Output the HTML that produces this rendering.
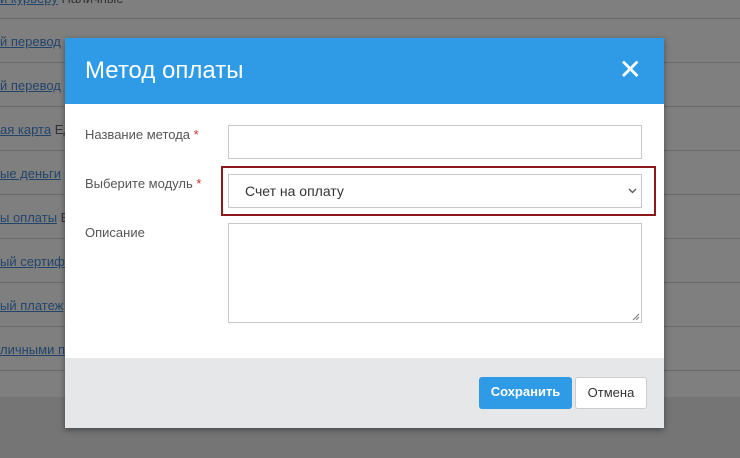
<!DOCTYPE html>
<html><head><meta charset="utf-8"><style>
body{margin:0;width:740px;height:458px;overflow:hidden;background:#757575;font-family:"Liberation Sans","DejaVu Sans",sans-serif;position:relative}
.bg{position:absolute;left:0;top:0;width:740px;height:397px;background:#7f7f7f}
.line{position:absolute;left:0;width:740px;height:1px;background:#6a6a6a}
.t{position:absolute;left:0;font-size:13px;color:#333;white-space:nowrap}
.t a{color:#23456b;text-decoration:underline}
.modal{position:absolute;left:65px;top:38px;width:599px;height:390px;background:#fff;box-shadow:0 2px 6px rgba(0,0,0,.4)}
.hd{height:66px;background:#2f9be6;color:#fff;font-size:24px;line-height:66px;padding-left:20px}
.x{position:absolute;right:22px;top:18px;color:#fff;font-size:28px;font-weight:bold;line-height:28px}
.lbl{position:absolute;left:20px;font-size:13px;color:#555}
.lbl b{color:#c9302c;font-weight:normal}
.inp{position:absolute;left:163px;width:414px;border:1px solid #c8c8c8;background:#fff;box-sizing:border-box}
.ft{position:absolute;left:0;top:320px;width:599px;height:70px;background:#e6e7e9}
.btn{position:absolute;top:19px;height:32px;box-sizing:border-box;font-size:13px;line-height:30px;text-align:center;border-radius:3px}
</style></head><body>
<div class="bg"></div>
<div class="line" style="top:18px"></div><div class="line" style="top:62px"></div><div class="line" style="top:106px"></div><div class="line" style="top:150px"></div><div class="line" style="top:194px"></div><div class="line" style="top:238px"></div><div class="line" style="top:282px"></div><div class="line" style="top:326px"></div><div class="line" style="top:370px"></div>
<div class="t" style="top:-9px"><a>и курьеру</a> Наличные</div>
<div class="t" style="top:34px"><a>й перевод</a></div>
<div class="t" style="top:78px"><a>й перевод</a></div>
<div class="t" style="top:122px"><a>ая карта</a> Ед</div>
<div class="t" style="top:166px"><a>ые деньги</a></div>
<div class="t" style="top:210px"><a>ы оплаты</a> Е</div>
<div class="t" style="top:254px"><a>ый сертифи</a></div>
<div class="t" style="top:298px"><a>ый платеж</a></div>
<div class="t" style="top:342px"><a>личными п</a></div>
<div class="modal">
<div class="hd">Метод оплаты</div><div class="x">✕</div>
<div class="lbl" style="top:89px">Название метода <b>*</b></div>
<div class="inp" style="top:87px;height:34px"></div>
<div class="lbl" style="top:138px">Выберите модуль <b>*</b></div>
<div style="position:absolute;left:156px;top:128px;width:435px;height:50px;border:2px solid #8b1a1a;box-sizing:border-box"></div>
<div class="inp" style="top:136px;height:34px;font-size:14px;color:#333;line-height:32px;padding-left:16px">Счет на оплату<svg style="position:absolute;right:4px;top:13px" width="9" height="6"><path d="M1 1l3.5 3.5L8 1" stroke="#555" stroke-width="1.3" fill="none"/></svg></div>
<div class="lbl" style="top:187px">Описание</div>
<div class="inp" style="top:185px;height:100px"><svg style="position:absolute;right:1px;bottom:1px" width="8" height="8"><path d="M7 1L1 7M7 4L4 7" stroke="#777"/></svg></div>
<div class="ft">
<div class="btn" style="left:414px;width:93px;background:#2f9be6;color:#fff;font-weight:bold">Сохранить</div>
<div class="btn" style="left:510px;width:72px;background:#fff;border:1px solid #ccc;color:#333">Отмена</div>
</div>
</div>
</body></html>
